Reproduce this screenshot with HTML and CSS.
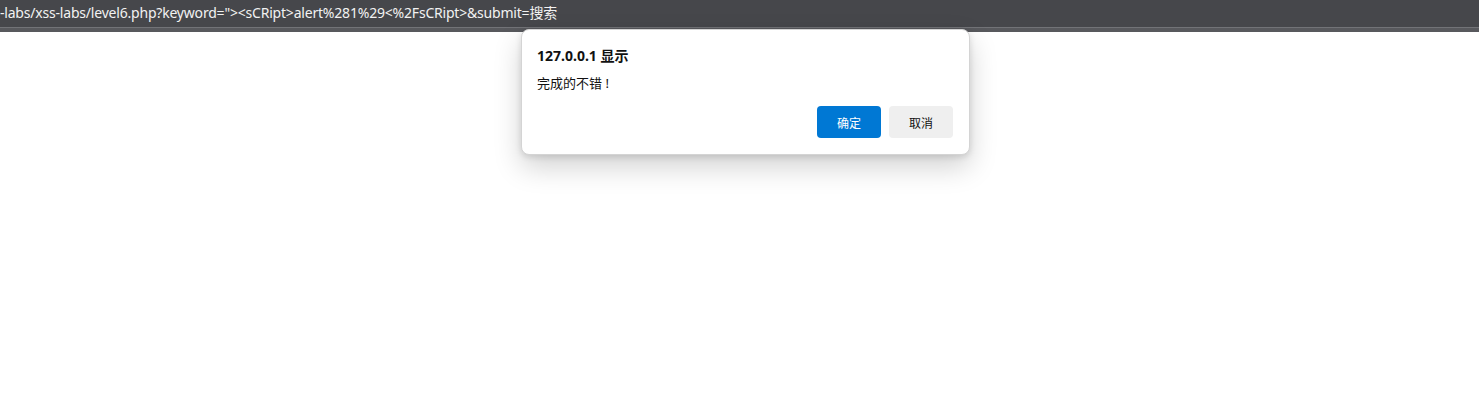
FILE: index.html
```
<!DOCTYPE html>
<html lang="zh-CN">
<head>
<meta charset="utf-8">
<title>level6</title>
<link rel="stylesheet" href="styles.css">
</head>
<body>

<div class="addr-bar">
  <div class="addr-text">-labs/xss-labs/level6.php?keyword="&gt;&lt;sCRipt&gt;alert%281%29&lt;%2FsCRipt&gt;&amp;submit=搜索</div>
</div>
<div class="addr-edge"></div>

<div class="page"></div>

<!-- alert 对话框 -->
<div class="dialog">
  <div class="dlg-title">127.0.0.1 显示</div>
  <div class="dlg-msg">完成的不错 !</div>
  <div class="dlg-btns">
    <button class="btn btn-ok">确定</button>
    <button class="btn btn-cancel">取消</button>
  </div>
</div>

</body>
</html>
```
FILE: styles.css
```
html, body {
  margin: 0; padding: 0;
  background: #ffffff;
  font-family: "Noto Sans", "Noto Sans CJK SC", sans-serif;
}

/* アドレスバー */
.addr-bar {
  height: 27px;
  background: #46474b;
  display: flex; align-items: center;
  overflow: hidden;
}
.addr-text {
  color: #f2f2f2;
  font-size: 14px;
  white-space: nowrap;
  padding-bottom: 3px;
  letter-spacing: -0.2px;
}
.addr-edge {
  height: 4px;
  border-top: 1px solid #727377;
  background: #58595d;
}

.page { height: 368px; }

/* ダイアログ */
.dialog {
  position: absolute;
  left: 521px; top: 29px;
  width: 416px;
  padding: 16px 16px 16px 15px;
  background: #ffffff;
  border-radius: 8px;
  border: 1px solid #d4d4d4;
  box-shadow: 0 12px 28px rgba(0,0,0,0.18), 0 2px 6px rgba(0,0,0,0.12);
}
.dlg-title {
  font-size: 14px; font-weight: bold;
  color: #111;
  line-height: 19px;
}
.dlg-msg {
  margin-top: 9px;
  font-size: 13px;
  color: #111;
  line-height: 18px;
}
.dlg-btns {
  margin-top: 14px;
  display: flex; justify-content: flex-end; gap: 8px;
}
.btn {
  width: 64px; height: 32px;
  border: none; border-radius: 4px;
  font-family: "Noto Sans CJK SC", sans-serif;
  font-size: 12px;
}
.btn-ok { background: #0078d4; color: #ffffff; }
.btn-cancel { background: #efefef; color: #111; }
```
